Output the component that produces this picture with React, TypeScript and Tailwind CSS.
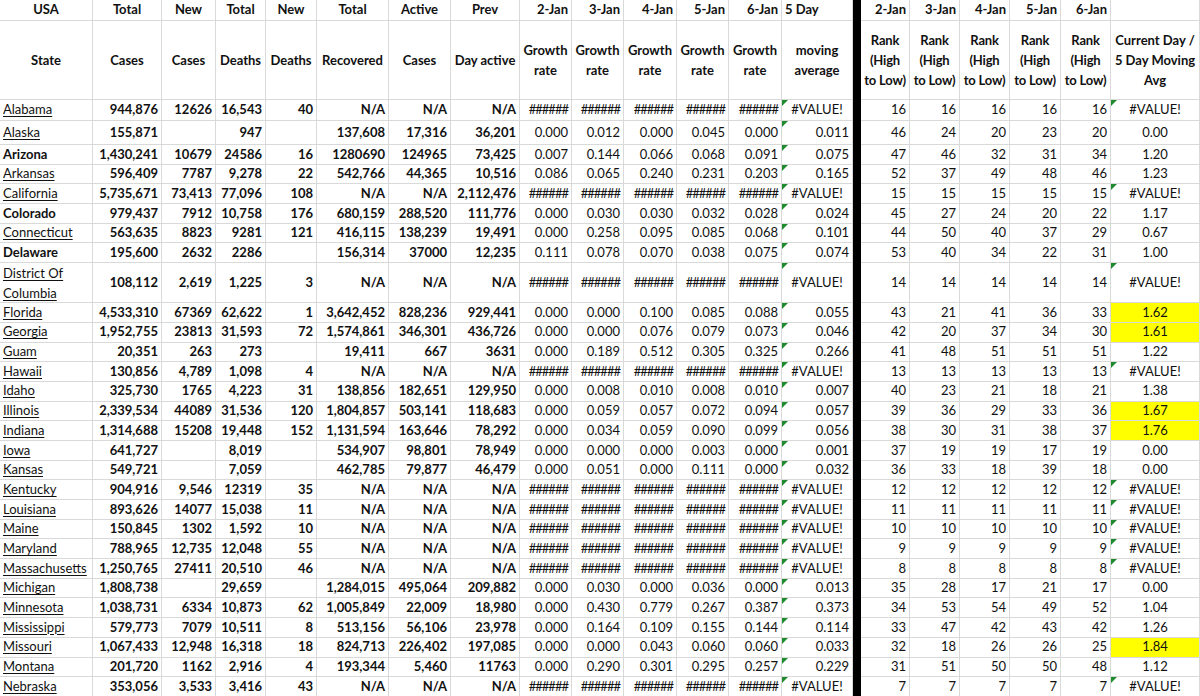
const cols =
  "grid grid-cols-[93px_69px_54px_50px_51px_72px_62px_69px_52px_52px_53px_52px_53px_71px_8px_49px_50px_50px_51px_50px_1fr]";

type Row = {
  s: string;
  v: string[]; // totalCases, newCases, totalDeaths, newDeaths, recovered, active, prev
  g: string[]; // growth 2..6 Jan
  ma: string;
  r: string[];
  cur: string;
  bold?: boolean;
  hl?: boolean;
  h?: string;
};

const H = "######";
const NA = ["N/A", "N/A", "N/A"];
const HH = [H, H, H, H, H];
const same = (n: string) => [n, n, n, n, n];

const rows: Row[] = [
  { s: "Alabama", v: ["944,876", "12626", "16,543", "40", ...NA], g: HH, ma: "#VALUE!", r: same("16"), cur: "#VALUE!", h: "h-[21px]" },
  { s: "Alaska", v: ["155,871", "", "947", "", "137,608", "17,316", "36,201"], g: ["0.000", "0.012", "0.000", "0.045", "0.000"], ma: "0.011", r: ["46", "24", "20", "23", "20"], cur: "0.00", h: "h-[24px]" },
  { s: "Arizona", bold: true, v: ["1,430,241", "10679", "24586", "16", "1280690", "124965", "73,425"], g: ["0.007", "0.144", "0.066", "0.068", "0.091"], ma: "0.075", r: ["47", "46", "32", "31", "34"], cur: "1.20" },
  { s: "Arkansas", v: ["596,409", "7787", "9,278", "22", "542,766", "44,365", "10,516"], g: ["0.086", "0.065", "0.240", "0.231", "0.203"], ma: "0.165", r: ["52", "37", "49", "48", "46"], cur: "1.23" },
  { s: "California", v: ["5,735,671", "73,413", "77,096", "108", "N/A", "N/A", "2,112,476"], g: HH, ma: "#VALUE!", r: same("15"), cur: "#VALUE!" },
  { s: "Colorado", bold: true, v: ["979,437", "7912", "10,758", "176", "680,159", "288,520", "111,776"], g: ["0.000", "0.030", "0.030", "0.032", "0.028"], ma: "0.024", r: ["45", "27", "24", "20", "22"], cur: "1.17" },
  { s: "Connecticut", v: ["563,635", "8823", "9281", "121", "416,115", "138,239", "19,491"], g: ["0.000", "0.258", "0.095", "0.085", "0.068"], ma: "0.101", r: ["44", "50", "40", "37", "29"], cur: "0.67" },
  { s: "Delaware", bold: true, v: ["195,600", "2632", "2286", "", "156,314", "37000", "12,235"], g: ["0.111", "0.078", "0.070", "0.038", "0.075"], ma: "0.074", r: ["53", "40", "34", "22", "31"], cur: "1.00" },
  { s: "District Of Columbia", v: ["108,112", "2,619", "1,225", "3", ...NA], g: HH, ma: "#VALUE!", r: same("14"), cur: "#VALUE!", h: "h-[40px]" },
  { s: "Florida", v: ["4,533,310", "67369", "62,622", "1", "3,642,452", "828,236", "929,441"], g: ["0.000", "0.000", "0.100", "0.085", "0.088"], ma: "0.055", r: ["43", "21", "41", "36", "33"], cur: "1.62", hl: true },
  { s: "Georgia", v: ["1,952,755", "23813", "31,593", "72", "1,574,861", "346,301", "436,726"], g: ["0.000", "0.000", "0.076", "0.079", "0.073"], ma: "0.046", r: ["42", "20", "37", "34", "30"], cur: "1.61", hl: true },
  { s: "Guam", v: ["20,351", "263", "273", "", "19,411", "667", "3631"], g: ["0.000", "0.189", "0.512", "0.305", "0.325"], ma: "0.266", r: ["41", "48", "51", "51", "51"], cur: "1.22" },
  { s: "Hawaii", v: ["130,856", "4,789", "1,098", "4", ...NA], g: HH, ma: "#VALUE!", r: same("13"), cur: "#VALUE!" },
  { s: "Idaho", v: ["325,730", "1765", "4,223", "31", "138,856", "182,651", "129,950"], g: ["0.000", "0.008", "0.010", "0.008", "0.010"], ma: "0.007", r: ["40", "23", "21", "18", "21"], cur: "1.38" },
  { s: "Illinois", v: ["2,339,534", "44089", "31,536", "120", "1,804,857", "503,141", "118,683"], g: ["0.000", "0.059", "0.057", "0.072", "0.094"], ma: "0.057", r: ["39", "36", "29", "33", "36"], cur: "1.67", hl: true },
  { s: "Indiana", v: ["1,314,688", "15208", "19,448", "152", "1,131,594", "163,646", "78,292"], g: ["0.000", "0.034", "0.059", "0.090", "0.099"], ma: "0.056", r: ["38", "30", "31", "38", "37"], cur: "1.76", hl: true },
  { s: "Iowa", v: ["641,727", "", "8,019", "", "534,907", "98,801", "78,949"], g: ["0.000", "0.000", "0.000", "0.003", "0.000"], ma: "0.001", r: ["37", "19", "19", "17", "19"], cur: "0.00" },
  { s: "Kansas", v: ["549,721", "", "7,059", "", "462,785", "79,877", "46,479"], g: ["0.000", "0.051", "0.000", "0.111", "0.000"], ma: "0.032", r: ["36", "33", "18", "39", "18"], cur: "0.00" },
  { s: "Kentucky", v: ["904,916", "9,546", "12319", "35", ...NA], g: HH, ma: "#VALUE!", r: same("12"), cur: "#VALUE!" },
  { s: "Louisiana", v: ["893,626", "14077", "15,038", "11", ...NA], g: HH, ma: "#VALUE!", r: same("11"), cur: "#VALUE!" },
  { s: "Maine", v: ["150,845", "1302", "1,592", "10", ...NA], g: HH, ma: "#VALUE!", r: same("10"), cur: "#VALUE!" },
  { s: "Maryland", v: ["788,965", "12,735", "12,048", "55", ...NA], g: HH, ma: "#VALUE!", r: same("9"), cur: "#VALUE!" },
  { s: "Massachusetts", v: ["1,250,765", "27411", "20,510", "46", ...NA], g: HH, ma: "#VALUE!", r: same("8"), cur: "#VALUE!" },
  { s: "Michigan", v: ["1,808,738", "", "29,659", "", "1,284,015", "495,064", "209,882"], g: ["0.000", "0.030", "0.000", "0.036", "0.000"], ma: "0.013", r: ["35", "28", "17", "21", "17"], cur: "0.00" },
  { s: "Minnesota", v: ["1,038,731", "6334", "10,873", "62", "1,005,849", "22,009", "18,980"], g: ["0.000", "0.430", "0.779", "0.267", "0.387"], ma: "0.373", r: ["34", "53", "54", "49", "52"], cur: "1.04" },
  { s: "Mississippi", v: ["579,773", "7079", "10,511", "8", "513,156", "56,106", "23,978"], g: ["0.000", "0.164", "0.109", "0.155", "0.144"], ma: "0.114", r: ["33", "47", "42", "43", "42"], cur: "1.26" },
  { s: "Missouri", v: ["1,067,433", "12,948", "16,318", "18", "824,713", "226,402", "197,085"], g: ["0.000", "0.000", "0.043", "0.060", "0.060"], ma: "0.033", r: ["32", "18", "26", "26", "25"], cur: "1.84", hl: true },
  { s: "Montana", v: ["201,720", "1162", "2,916", "4", "193,344", "5,460", "11763"], g: ["0.000", "0.290", "0.301", "0.295", "0.257"], ma: "0.229", r: ["31", "51", "50", "50", "48"], cur: "1.12" },
  { s: "Nebraska", v: ["353,056", "3,533", "3,416", "43", ...NA], g: HH, ma: "#VALUE!", r: same("7"), cur: "#VALUE!" },
];

const cell = "border-r border-b border-[#d9d9d9] flex items-center px-[3px] overflow-hidden whitespace-nowrap";

const Flag = () => (
  <span className="absolute top-0 left-0 w-0 h-0 border-t-[6px] border-r-[6px] border-t-[#1f8a2e] border-r-transparent" />
);

const Bar = () => <div className="bg-black" />;

function HeaderRows() {
  const top = ["USA", "Total", "New", "Total", "New", "Total", "Active", "Prev"];
  const dates = ["2-Jan", "3-Jan", "4-Jan", "5-Jan", "6-Jan"];
  const second = ["State", "Cases", "Cases", "Deaths", "Deaths", "Recovered", "Cases", "Day active"];
  return (
    <>
      <div className={`${cols} h-[21px] font-bold`}>
        {top.map((t, i) => (
          <div key={i} className={`${cell} justify-center`}>{t}</div>
        ))}
        {dates.map((d) => (
          <div key={d} className={`${cell} justify-end`}>{d}</div>
        ))}
        <div className={`${cell} justify-start`}>5 Day</div>
        <Bar />
        {dates.map((d) => (
          <div key={"r" + d} className={`${cell} justify-end`}>{d}</div>
        ))}
        <div className={cell} />
      </div>
      <div className={`${cols} h-[79px] font-bold leading-[20px] text-center`}>
        {second.map((t, i) => (
          <div key={i} className={`${cell} justify-center`}>{t}</div>
        ))}
        {dates.map((d) => (
          <div key={d} className={`${cell} justify-center whitespace-normal`}>Growth<br />rate</div>
        ))}
        <div className={`${cell} justify-center whitespace-normal`}>moving<br />average</div>
        <Bar />
        {dates.map((d) => (
          <div key={"r" + d} className={`${cell} justify-center whitespace-normal px-0 tracking-[-0.2px]`}>
            Rank<br />(High<br />to Low)
          </div>
        ))}
        <div className={`${cell} justify-center whitespace-normal px-0`}>
          Current Day /<br />5 Day Moving<br />Avg
        </div>
      </div>
    </>
  );
}

function DataRow({ row }: { row: Row }) {
  const wrap = row.s.includes(" Of ");
  return (
    <div className={`${cols} ${row.h ?? "h-[19.7px]"}`}>
      <div className={`${cell} ${wrap ? "whitespace-normal leading-[20px]" : ""} px-[1px]`}>
        <span className={row.bold ? "font-bold" : "underline underline-offset-2 decoration-1"}>
          {wrap ? (
            <>District Of<br />Columbia</>
          ) : (
            row.s
          )}
        </span>
      </div>
      {row.v.map((x, i) => (
        <div key={i} className={`${cell} justify-end font-bold`}>{x}</div>
      ))}
      {row.g.map((x, i) => (
        <div key={"g" + i} className={`${cell} justify-end ${x === H ? "tracking-[-1px] justify-center" : ""}`}>{x}</div>
      ))}
      <div className={`${cell} relative ${row.ma === "#VALUE!" ? "justify-center" : "justify-end"}`}>
        <Flag />
        {row.ma}
      </div>
      <Bar />
      {row.r.map((x, i) => (
        <div key={"r" + i} className={`${cell} justify-end`}>{x}</div>
      ))}
      <div className={`${cell} relative justify-center ${row.hl ? "bg-[#ffff00]" : ""}`}>
        {row.cur === "#VALUE!" && <Flag />}
        {row.cur}
      </div>
    </div>
  );
}

export default function App() {
  return (
    <div className="w-[1200px] h-[696px] overflow-hidden bg-white text-[#111] text-[13px] font-['Lato','Noto_Sans',sans-serif]">
      <HeaderRows />
      {rows.map((r) => (
        <DataRow key={r.s} row={r} />
      ))}
    </div>
  );
}
